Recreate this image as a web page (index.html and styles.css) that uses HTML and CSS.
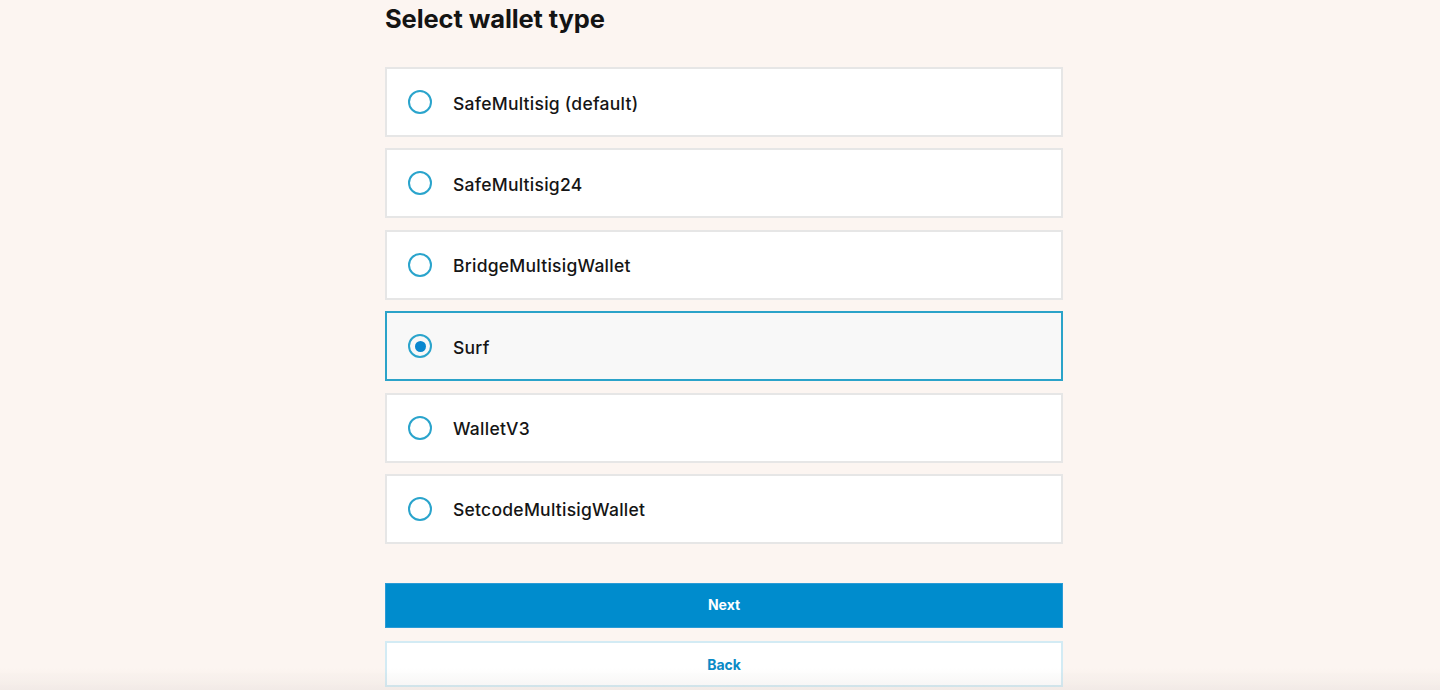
FILE: index.html
```html
<!DOCTYPE html>
<html>
<head>
<meta charset="utf-8">
<link rel="stylesheet" href="styles.css">
</head>
<body>
<main class="page">
  <h1 class="title">Select wallet type</h1>
  <div class="options">
    <label class="option"><span class="radio"></span><span class="label">SafeMultisig (default)</span></label>
    <label class="option"><span class="radio"></span><span class="label">SafeMultisig24</span></label>
    <label class="option"><span class="radio"></span><span class="label">BridgeMultisigWallet</span></label>
    <label class="option selected"><span class="radio"></span><span class="label">Surf</span></label>
    <label class="option"><span class="radio"></span><span class="label">WalletV3</span></label>
    <label class="option"><span class="radio"></span><span class="label">SetcodeMultisigWallet</span></label>
  </div>
  <button class="btn btn-primary">Next</button>
  <button class="btn btn-secondary">Back</button>
</main>
<div class="bottom-fade"></div>
</body>
</html>
```
FILE: styles.css
```css
html, body {
  margin: 0;
  padding: 0;
  height: 690px;
  overflow: hidden;
}
body {
  background: #fcf5f1;
  font-family: Inter, "Noto Sans", sans-serif;
  color: #141414;
}
.page {
  width: 678px;
  margin-left: 385px;
  display: flex;
  flex-direction: column;
}
.title {
  margin: 3px 0 0 0;
  font-size: 25.5px;
  line-height: 32px;
  font-weight: 700;
  letter-spacing: -0.1px;
  height: 32px;
}
.options {
  margin-top: 32px;
  display: flex;
  flex-direction: column;
  gap: 11.4px;
}
.option {
  box-sizing: border-box;
  height: 70px;
  background: #ffffff;
  border: 2px solid #e6e6e6;
  display: flex;
  align-items: center;
  padding-left: 21px;
}
.option.selected {
  background: #f8f8f8;
  border-color: #2ba3c9;
}
.radio {
  box-sizing: border-box;
  width: 24px;
  height: 24px;
  border-radius: 50%;
  border: 2px solid #2aa4cc;
  display: flex;
  align-items: center;
  justify-content: center;
  flex-shrink: 0;
}
.option.selected .radio::after {
  content: "";
  width: 11px;
  height: 11px;
  border-radius: 50%;
  background: #0a87cf;
}
.label {
  margin-left: 21px;
  padding-top: 2px;
  font-size: 17.5px;
  font-weight: 500;
  letter-spacing: 0.25px;
  color: #151515;
}
.btn {
  box-sizing: border-box;
  width: 678px;
  font-family: Inter, "Noto Sans", sans-serif;
  font-size: 14px;
  font-weight: 700;
  cursor: pointer;
  padding: 0;
}
.btn-primary {
  margin-top: 39px;
  height: 45px;
  background: #008ccd;
  color: #ffffff;
  border: 1px solid #2a9bd6;
  padding-bottom: 1px;
}
.btn-secondary {
  margin-top: 13px;
  height: 46px;
  background: #ffffff;
  color: #0a8ac6;
  border: 2px solid #d3ebf4;
  padding-top: 2px;
}
.bottom-fade {
  position: fixed;
  left: 0;
  right: 0;
  bottom: 0;
  height: 22px;
  background: linear-gradient(to bottom, rgba(200,190,185,0), rgba(200,190,185,0.18));
  pointer-events: none;
}
```
